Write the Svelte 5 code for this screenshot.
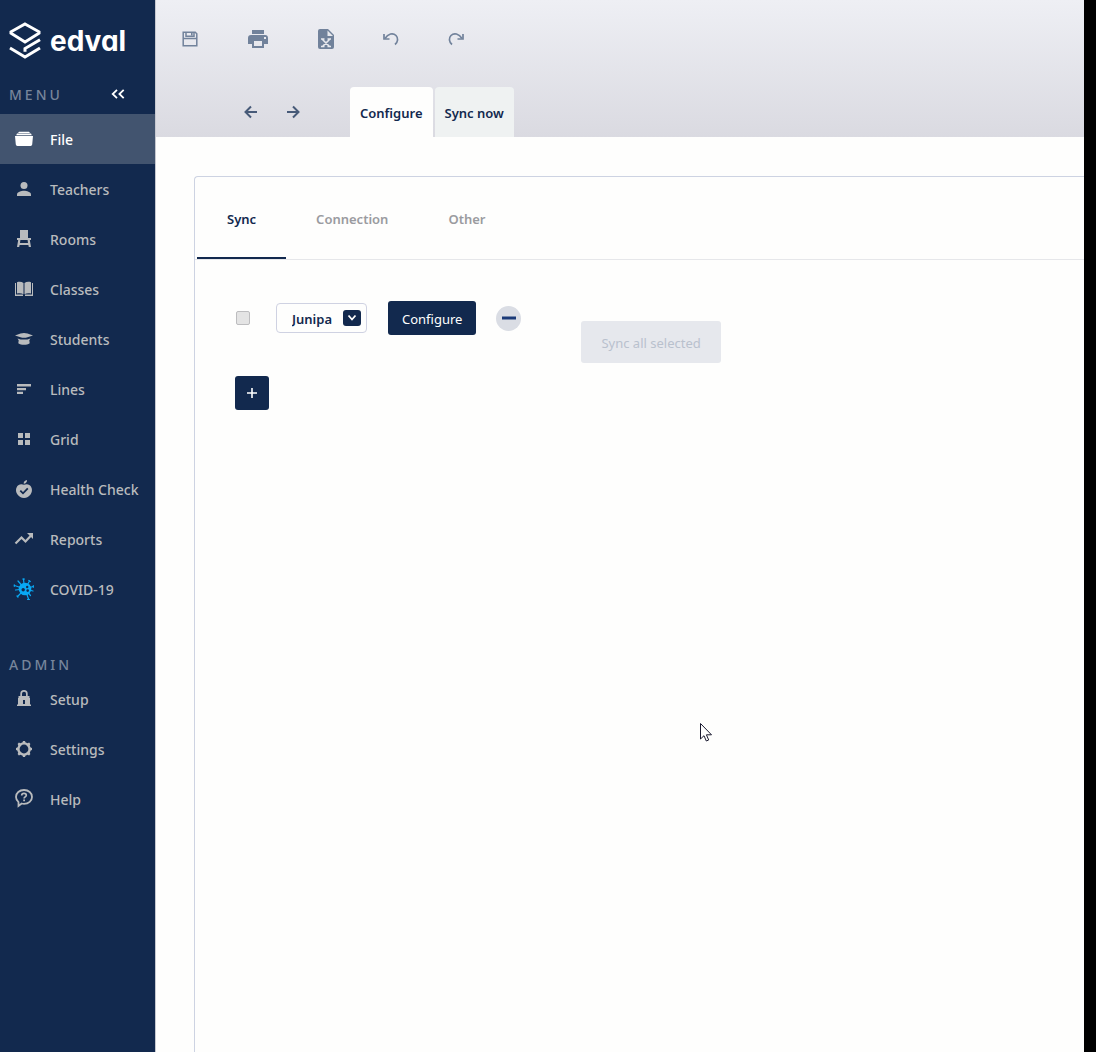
<script>
  const menu = [
    { id: 'file', label: 'File' },
    { id: 'teachers', label: 'Teachers' },
    { id: 'rooms', label: 'Rooms' },
    { id: 'classes', label: 'Classes' },
    { id: 'students', label: 'Students' },
    { id: 'lines', label: 'Lines' },
    { id: 'grid', label: 'Grid' },
    { id: 'health', label: 'Health Check' },
    { id: 'reports', label: 'Reports' },
    { id: 'covid', label: 'COVID-19' }
  ];
  const admin = [
    { id: 'setup', label: 'Setup' },
    { id: 'settings', label: 'Settings' },
    { id: 'help', label: 'Help' }
  ];
  const sections = ['Sync', 'Connection', 'Other'];

  let page = $state('file');
  let view = $state('Configure');
  let section = $state('Sync');
  let provider = $state('Junipa');
</script>

{#snippet icon(id)}
  <svg class="icon" viewBox="0 0 24 24" width="24" height="24" fill="currentColor" aria-hidden="true">
    {#if id === 'file'}
      <path d="M7 4.800h10l1 1.200H6zM5 6.600h14l.8 1.600H4.200zM3 9h18l-.8 8.600a1.600 1.600 0 0 1-1.600 1.400H5.400a1.600 1.600 0 0 1-1.600-1.400z" />
    {:else if id === 'teachers'}
      <circle cx="12" cy="8.400" r="3.500" />
      <path d="M5 19v-1.600c0-2.400 4.400-3.700 7-3.700s7 1.300 7 3.700V19z" />
    {:else if id === 'rooms'}
      <path d="M8 3h8v8h3v2h-1.200l1.200 7h-2.200l-.4-2H7.600l-.4 2H5l1.200-7H5v-2h3zM8.400 13l-.4 3h8l-.4-3z" fill-rule="evenodd" />
    {:else if id === 'classes'}
      <path d="M3 6h1v11.500h7v1.500H3zM21 6h-1v11.500h-7v1.500h8zM5 5.200c2.500-.6 4.800-.4 6.500.8v11.200c-1.800-.9-4-1.100-6.500-.6zM19 5.200c-2.500-.6-4.800-.4-6.500.8v11.200c1.800-.9 4-1.100 6.500-.6z" />
    {:else if id === 'students'}
      <path d="M3 8.400 8.500 6.600c2.300-.7 4.700-.7 7 0L21 8.400l-5.500 1.800c-2.300.7-4.700.7-7 0zM5.500 11.400c4 1.600 9 1.600 13 0l-1.200 1.800.4 3c-3 2.200-8.400 2.200-11.400 0l.4-3z" />
    {:else if id === 'lines'}
      <path d="M5 7h14v2.400H5zM5 11h9v2.300H5zM5 14.800h6v2.200H5z" />
    {:else if id === 'grid'}
      <path d="M6 6h5v5H6zM13 6h5v5h-5zM6 13h5v5H6zM13 13h5v5h-5z" />
    {:else if id === 'health'}
      <path d="M11.700 6.800C11.500 4.500 13 3.300 15 3c.1 2-1 3.600-3.300 3.800z" />
      <path d="M12 7.700c1.800-.8 4-.8 5.700.5 2.700 2.100 2.900 6.100 1 9-1.600 2.400-3.900 3.800-6.700 3.800s-5.100-1.400-6.700-3.800c-1.900-2.900-1.700-6.900 1-9 1.700-1.300 3.900-1.300 5.700-.5z" />
      <path d="m8.300 13.600 2.700 2.700 4.800-4.900" fill="none" stroke="#12294e" stroke-width="1.800" />
    {:else if id === 'reports'}
      <path d="m3.500 16.500 6-6 4 4 6-6.500" fill="none" stroke="currentColor" stroke-width="2.200" />
      <path d="M15 6h6v6z" />
    {:else if id === 'covid'}
      <g stroke="currentColor" stroke-width="1.200" stroke-linecap="round" fill="none">
        <path d="M12.500 12 11.500 2M13 12l4.500-8M13 12l8-2.500M13 12l8 2M13 12l5.500 6.500M13 12l3.500 10M13 12l-7.500 7.500M13 12l-9.500 1M13 12 2.500 8.500M13 12 6 4" />
        <path d="M10.700 2h1.800M16.800 3.500l1.500 1M21.300 8.700v1.600M15.500 22.500h2M2.300 7.800v1.500M5 19l1 1" />
      </g>
      <circle cx="13" cy="12" r="6.300" />
      <g fill="#12294e"><circle cx="11.200" cy="12.800" r="1.700" /><circle cx="15.200" cy="10" r="1.200" /><circle cx="15.700" cy="13.600" r="1.300" /></g>
    {:else if id === 'setup'}
      <path d="M5 11h1.500V9H8.300V6.700a3.700 3.700 0 0 1 7.400 0V9h1.800v2H18v6.500h1V19H5v-1.500h1V11zM10 9h4V6.800a2 2 0 0 0-4 0zM11 13v4h2v-4z" fill-rule="evenodd" />
    {:else if id === 'settings'}
      <circle cx="12" cy="12" r="5.600" fill="none" stroke="currentColor" stroke-width="2.400" />
      <path d="m10.300 6 .7-2h2l.7 2zM10.300 18l.7 2h2l.7-2zM6 10.300l-2 .7v2l2 .7zM18 10.300l2 .7v2l-2 .7zM6.600 9l-1-2.100 1.300-1.300 2.100 1zM15 6.600l2.100-1 1.300 1.300-1 2.100zM17.400 15l1 2.100-1.300 1.300-2.100-1zM9 17.400l-2.100 1-1.300-1.300 1-2.100z" />
    {:else if id === 'help'}
      <path d="M12 3c4.600 0 8 2.900 8 6.900s-3.400 6.900-8 6.900c-.8 0-1.600-.1-2.300-.3L6.500 19v-3.900C5 13.800 4 11.900 4 9.900 4 5.900 7.400 3 12 3z" fill="none" stroke="currentColor" stroke-width="1.800" />
      <path d="M9.700 8.500c0-1.500 1-2.200 2.300-2.200s2.300.8 2.300 2c0 1.600-2.200 1.600-2.200 3.200" fill="none" stroke="currentColor" stroke-width="1.700" />
      <path d="M11.200 12.500h1.800v1.700h-1.800z" />
    {/if}
  </svg>
{/snippet}

{#snippet navList(items)}
  <ul>
    {#each items as item}
      <li>
        <a href={'#' + item.id} class={['nav-link', item.id, page === item.id && 'active']} onclick={() => (page = item.id)}>
          {@render icon(item.id)}
          <span>{item.label}</span>
        </a>
      </li>
    {/each}
  </ul>
{/snippet}

<div class="app">
  <nav class="sidebar" aria-label="Main">
    <div class="brand">
      <svg viewBox="0 0 32 38" width="32" height="38" aria-hidden="true" fill="none" stroke="#fff" stroke-width="3">
        <path d="M16 2 30 9.800v1.400L16 20 2 11.200V9.800z" />
        <path d="M31 17.800 16 26.500v3.200" />
        <path d="M1 26 16 35 31 26" />
      </svg>
      <span>edval</span>
    </div>
    <div class="heading">
      <h2>MENU</h2>
      <button class="collapse" aria-label="Collapse menu">
        <svg viewBox="0 0 14 10" width="14" height="10" fill="none" stroke="currentColor" stroke-width="1.800"><path d="M6 .8 1.700 5 6 9.200M12.700.8 8.400 5l4.300 4.200" /></svg>
      </button>
    </div>
    {@render navList(menu)}
    <div class="heading admin"><h2>ADMIN</h2></div>
    {@render navList(admin)}
  </nav>

  <div class="workspace">
    <header>
      <div class="toolbar">
        <button aria-label="Save">
          <svg viewBox="0 0 20 20" width="20" height="20"><path d="M3.200 3.200h12l1.600 1.600v12H3.200zM6 3.200v4h8v-4M3.200 9.500h13.600" fill="none" stroke="currentColor" stroke-width="1.500" /><path d="M11 3.500h1.600v3H11z" fill="currentColor" /></svg>
        </button>
        <button class="print" aria-label="Print">
          <svg viewBox="0 0 20 20" width="20" height="20" fill="currentColor"><path d="M4 1h12v4H4zM3 6h14a3 3 0 0 1 3 3v6h-4v4H4v-4H0V9a3 3 0 0 1 3-3zm3 6v5h8v-5zm10-4v2h2V8z" fill-rule="evenodd" /></svg>
        </button>
        <button aria-label="Export to spreadsheet">
          <svg viewBox="0 0 20 20" width="20" height="20"><path d="M4 0h8l6 6v12a2 2 0 0 1-2 2H4a2 2 0 0 1-2-2V2a2 2 0 0 1 2-2z" fill="currentColor" /><path d="M11.500 1.500V7H17z" fill="#e8e9ee" /><path d="m6.500 10.500 7 7M13.500 10.500l-7 7M5 10h3.500M11.500 10H15M5 17.500h3.500M11.500 17.500H15" stroke="#e8e9ee" stroke-width="1.600" /></svg>
        </button>
        <button aria-label="Undo">
          <svg viewBox="0 0 20 20" width="20" height="20" fill="none" stroke="currentColor" stroke-width="1.700"><path d="M4 9.500C7 4.500 12 3.500 15 6.500c2.500 2.500 2 6.500-1 9" /><path d="M3 5v5h5.500" /></svg>
        </button>
        <button aria-label="Redo">
          <svg viewBox="0 0 20 20" width="20" height="20" fill="none" stroke="currentColor" stroke-width="1.700"><path d="M16 9.500C13 4.500 8 3.500 5 6.500c-2.500 2.500-2 6.500 1 9" /><path d="M17 5v5h-5.500" /></svg>
        </button>
      </div>
      <div class="view-bar">
        <div class="history">
          <button aria-label="Back"><svg viewBox="0 0 14 14" width="14" height="14"><path d="M7 1.500 1.500 7 7 12.500M1.500 7H13" /></svg></button>
          <button aria-label="Forward"><svg viewBox="0 0 14 14" width="14" height="14"><path d="M7 1.500 12.500 7 7 12.500M12.500 7H1" /></svg></button>
        </div>
        {#each ['Configure', 'Sync now'] as name}
          <button class={['view-tab', view === name && 'active']} onclick={() => (view = name)}>{name}</button>
        {/each}
      </div>
    </header>

    <main>
      <section class="panel">
        <div class="section-tabs" role="tablist">
          {#each sections as name}
            <button role="tab" aria-selected={section === name} class={{ active: section === name }} onclick={() => (section = name)}>{name}</button>
          {/each}
        </div>
        <div class="content">
          <div class="connections">
            <div class="connection">
              <input type="checkbox" aria-label="Select connection" />
              <div class="select">
                <select aria-label="Provider" bind:value={provider}>
                  <option>Junipa</option>
                </select>
                <svg viewBox="0 0 18 16" width="18" height="16" aria-hidden="true"><rect width="18" height="16" rx="3" fill="#12294e" /><path d="m5.500 5.500 3.500 4 3.500-4" fill="none" stroke="#fff" stroke-width="1.800" /></svg>
              </div>
              <button class="primary">Configure</button>
              <button class="remove" aria-label="Remove connection">
                <svg viewBox="0 0 14 4" width="14" height="4"><path d="M0 .5h14v3H0z" fill="currentColor" /></svg>
              </button>
            </div>
            <button class="primary add" aria-label="Add connection">
              <svg viewBox="0 0 10 10" width="10" height="10"><path d="M5 0v10M0 5h10" stroke="#fff" stroke-width="1.600" /></svg>
            </button>
          </div>
          <button class="sync-all" disabled>Sync all selected</button>
        </div>
      </section>
    </main>
  </div>

  <svg class="cursor" viewBox="0 0 13 20" width="13" height="20" aria-hidden="true"><path d="M.5.500v15.500L4 12.700l2.300 5.300 2.400-1-2.300-5.200h5.100z" fill="#fff" stroke="#1b1b30" /></svg>
</div>

<style>
  :global(body) {
    margin: 0;
    background: #000;
  }
  .app {
    display: flex;
    position: relative;
    box-sizing: border-box;
    min-height: 100vh;
    padding-right: 12px;
    font-family: 'Noto Sans', 'Open Sans', sans-serif;
    font-size: 14px;
    line-height: 20px;
    color: #12294e;
  }
  button,
  select {
    font: inherit;
    color: inherit;
    margin: 0;
    padding: 0;
    border: 0;
    background: none;
  }
  svg {
    display: block;
    flex: none;
  }

  .sidebar {
    flex: 0 0 155px;
    background: #12294e;
    color: #b9bbbd;
  }
  .brand {
    display: flex;
    align-items: center;
    gap: 9px;
    height: 82px;
    box-sizing: border-box;
    padding-left: 9px;
    color: #fff;
    font-family: Inter, sans-serif;
    font-size: 28px;
    font-weight: 700;
    font-feature-settings: 'cv11';
  }
  .heading {
    display: flex;
    align-items: center;
    justify-content: space-between;
    height: 24px;
    padding: 0 30px 8px 9px;
  }
  h2 {
    margin: 0;
    padding-top: 2px;
    font-size: 14px;
    font-weight: 500;
    line-height: 20px;
    letter-spacing: 3px;
    color: #77859b;
  }
  .admin {
    height: 20px;
    padding-top: 40px;
    padding-bottom: 0;
  }
  .collapse {
    color: #fff;
  }
  ul {
    margin: 0;
    padding: 0;
    list-style: none;
  }
  .nav-link {
    display: flex;
    align-items: center;
    gap: 14px;
    height: 50px;
    padding-left: 12px;
    color: inherit;
    font-weight: 500;
    text-decoration: none;
    white-space: nowrap;
  }
  .nav-link span {
    padding-top: 2px;
  }
  .nav-link.active {
    background: #42546f;
    color: #fff;
  }
  .covid .icon {
    color: #08a8f4;
  }

  .workspace {
    display: flex;
    flex: 1;
    flex-direction: column;
    min-width: 0;
    background: #fefefd;
    border-left: 1px solid #c6c8d0;
  }
  header {
    background: linear-gradient(#eeeff4, #dadae1);
  }
  .toolbar {
    display: flex;
    align-items: center;
    gap: 45px;
    height: 78px;
    padding-left: 24px;
    color: #71829b;
  }
  .print {
    padding: 0 3px;
  }
  .view-bar {
    display: flex;
    gap: 2px;
    height: 50px;
    margin-top: 9px;
    padding-left: 88px;
  }
  .history {
    display: flex;
    gap: 28px;
    width: 104px;
  }
  .history path {
    fill: none;
    stroke: #475a78;
    stroke-width: 2;
  }
  .view-tab {
    padding: 2px 10px 0;
    border-radius: 4px 4px 0 0;
    background: #eff2f2;
    font-size: 13px;
    font-weight: 600;
  }
  .view-tab.active {
    background: #fefefd;
  }

  main {
    display: flex;
    flex: 1;
    padding: 39px 0 0 38px;
  }
  .panel {
    flex: 1;
    border: solid #cdd3e2;
    border-width: 1px 0 0 1px;
    border-radius: 4px 0 0 0;
  }
  .section-tabs {
    display: flex;
    height: 82px;
    padding-left: 2px;
    border-bottom: 1px solid #e6e7ea;
  }
  .section-tabs button {
    padding: 3px 30px 0;
    border-bottom: 2px solid transparent;
    font-size: 13px;
    font-weight: 600;
    color: #9a9ba0;
  }
  .section-tabs .active {
    border-color: #12294e;
    color: #12294e;
  }
  .content {
    display: flex;
    align-items: center;
    gap: 60px;
    padding: 41px 40px;
  }
  .connection {
    display: flex;
    align-items: center;
  }
  input {
    appearance: none;
    box-sizing: border-box;
    width: 14px;
    height: 14px;
    margin: 0 26px 0 1px;
    border: 1px solid #bdbdbf;
    border-radius: 2px;
    background: #e4e4e4;
  }
  .select {
    display: flex;
    position: relative;
  }
  select {
    appearance: none;
    box-sizing: border-box;
    width: 91px;
    height: 30px;
    padding: 2px 32px 0 15px;
    border: 1px solid #cfd2e2;
    border-radius: 4px;
    font-size: 13px;
    font-weight: 600;
  }
  .select svg {
    position: absolute;
    top: 7px;
    right: 6px;
    pointer-events: none;
  }
  .primary {
    height: 34px;
    margin: 0 20px 0 21px;
    padding: 2px 14px 0;
    border-radius: 3px;
    background: #12294e;
    color: #fff;
    font-size: 13px;
  }
  .remove {
    display: grid;
    place-items: center;
    width: 25px;
    height: 25px;
    border-radius: 50%;
    background: #dadde4;
    color: #1b3a78;
  }
  .add {
    display: grid;
    place-items: center;
    width: 34px;
    margin: 41px 0 0;
    padding: 0;
  }
  .sync-all {
    height: 42px;
    padding: 2px 20px 0;
    margin-bottom: 28px;
    border-radius: 3px;
    background: #e6e8ed;
    color: #b9c1cd;
    font-size: 13px;
  }
  .cursor {
    position: absolute;
    top: 723px;
    left: 700px;
    pointer-events: none;
  }
</style>
